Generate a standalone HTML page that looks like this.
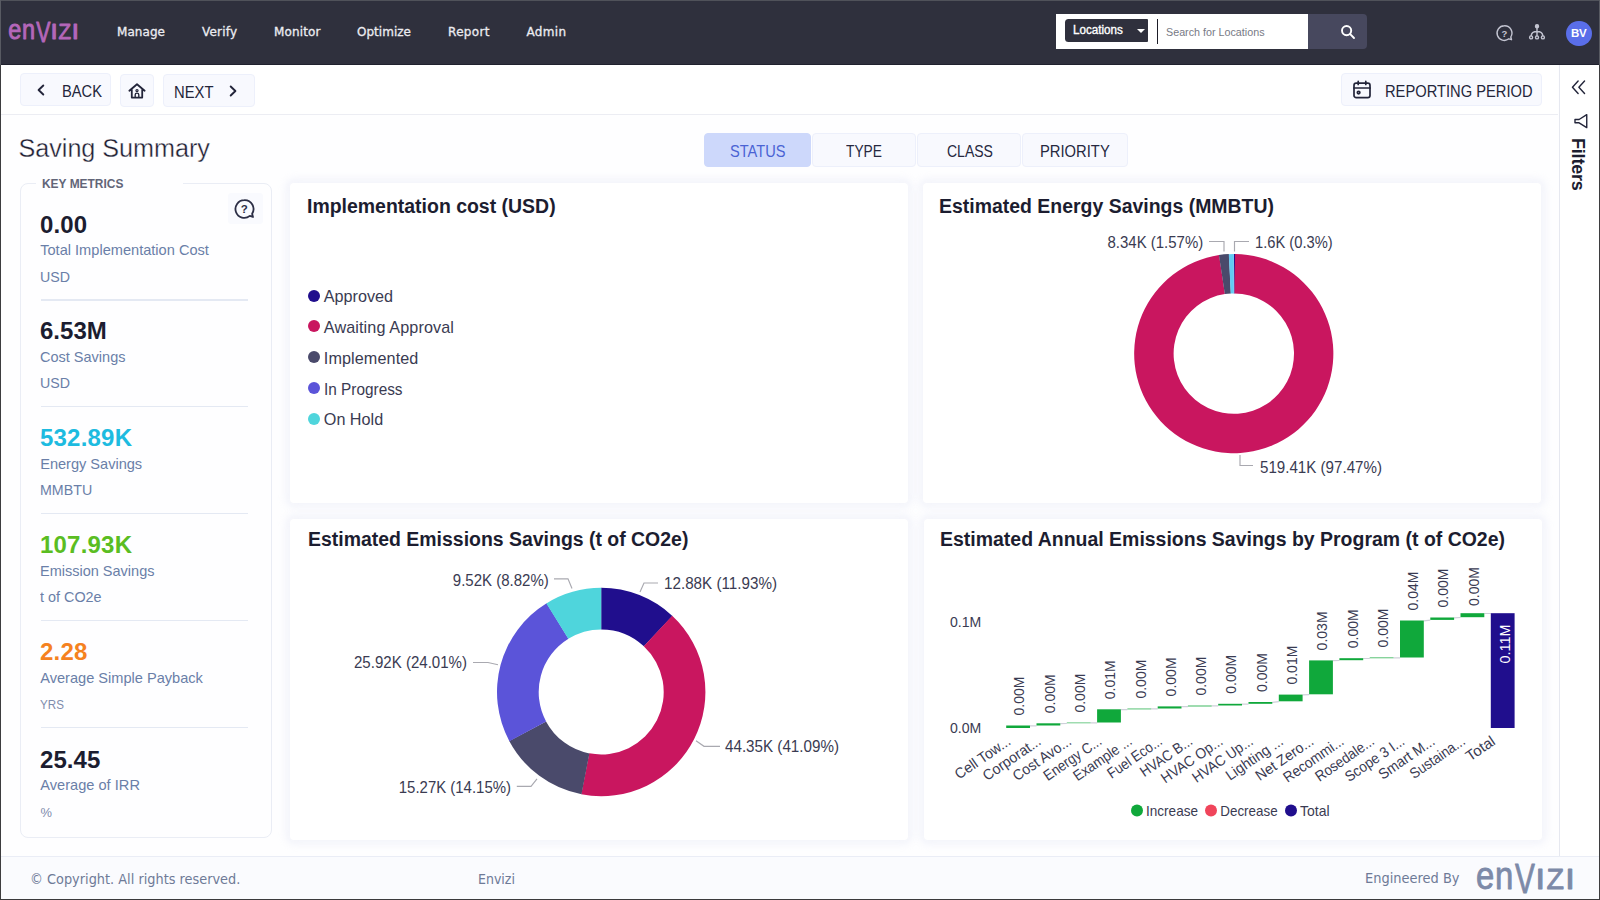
<!DOCTYPE html>
<html lang="en">
<head>
<meta charset="utf-8">
<title>Envizi - Saving Summary</title>
<style>
*{box-sizing:border-box;margin:0;padding:0}
html,body{width:1600px;height:900px;overflow:hidden;background:#fefeff;font-family:"Liberation Sans",sans-serif;color:#23253a}
.abs{position:absolute}
#page{position:relative;width:1600px;height:900px;overflow:hidden;background:#fefeff}
#frame{position:absolute;left:0;top:0;width:1600px;height:900px;z-index:50;pointer-events:none}#frame i{position:absolute;display:block}
/* header */
#hdr{position:absolute;left:0;top:0;width:1600px;height:65px;background:#2f303d;border-top:2px solid #2f303d;border-bottom:1px solid #20212e}
.nav{position:absolute;top:20.5px;font-family:"DejaVu Sans","Liberation Sans",sans-serif;font-size:12px;color:#ececf1;line-height:18px;white-space:nowrap;-webkit-text-stroke:.3px #ececf1}
.t{position:absolute;white-space:nowrap;line-height:1}
/* toolbar */
#tb{position:absolute;left:0;top:65px;width:1558px;height:50px;background:#fff;border-bottom:1px solid #ecedf3}
.btn{position:absolute;background:#f8f9fe;border:1px solid #edf0fb;border-radius:4px}
/* side */
#side{position:absolute;left:1559px;top:65px;width:42px;height:791px;background:#fff;border-left:1px solid #e6e8f0}
/* cards */
.card{position:absolute;background:#fff;border-radius:4px;box-shadow:0 0 9px 4px rgba(239,240,249,.8)}
.ct{position:absolute;left:18px;top:12px;font-weight:bold;font-size:19px;line-height:22px;color:#1c1d30;white-space:nowrap}
/* footer */
#ft{position:absolute;left:0;top:856px;width:1600px;height:44px;background:#fafbfe;border-top:1px solid #eaedf6}
</style>
</head>
<body>
<div id="page">
<div id="hdr">
<div class="abs" style="left:0;top:-2px;width:1600px;height:1px;background:#50525a"></div>
<svg class="abs" style="left:8.5px;top:19px;overflow:visible" width="70.0" height="24.0" viewBox="0 0 70 24" fill="#b466b9" stroke="#b466b9" stroke-width="0.95" stroke-linejoin="round" font-family="Liberation Sans, sans-serif"><text><tspan x="-0.75" y="17.8" font-size="27.1" textLength="13.04" lengthAdjust="spacingAndGlyphs">e</tspan><tspan x="12.94" y="17.8" font-size="27.1" textLength="13.09" lengthAdjust="spacingAndGlyphs">n</tspan><tspan x="27.16" y="20.7" font-size="30.1" textLength="14.19" lengthAdjust="spacingAndGlyphs">V</tspan><tspan x="41.62" y="17.8" font-size="21.2" textLength="7.15" lengthAdjust="spacingAndGlyphs">I</tspan><tspan x="49.60" y="17.8" font-size="21.2" textLength="12.54" lengthAdjust="spacingAndGlyphs">Z</tspan><tspan x="62.87" y="17.8" font-size="21.2" textLength="7.15" lengthAdjust="spacingAndGlyphs">I</tspan></text></svg>
<div class="nav" style="left:117px;letter-spacing:0.067px">Manage</div>
<div class="nav" style="left:202px;letter-spacing:0.192px">Verify</div>
<div class="nav" style="left:274px;letter-spacing:0.147px">Monitor</div>
<div class="nav" style="left:357px;letter-spacing:0.028px">Optimize</div>
<div class="nav" style="left:448px;letter-spacing:0.344px">Report</div>
<div class="nav" style="left:526.5px;letter-spacing:0.314px">Admin</div>
<div class="abs" style="left:1056px;top:12px;width:252px;height:35.300px;background:#fff"></div>
<div class="abs" style="left:1308px;top:12px;width:59px;height:35.300px;background:#47485e;border-radius:0 4px 4px 0"></div>
<div class="abs" style="left:1064.500px;top:17.200px;width:83.500px;height:23.300px;background:#2f303d;border-radius:3.500px 1px 1px 3.500px"></div>
<div class="t" style="left:1073px;top:20.5px;font-size:12px;line-height:14px;color:#fff;transform-origin:0 0;transform:scaleX(0.9694);-webkit-text-stroke:.35px #fff">Locations</div>
<div class="abs" style="left:1137px;top:27px;width:0;height:0;border-left:4px solid transparent;border-right:4px solid transparent;border-top:4.5px solid #fff"></div>
<div class="abs" style="left:1156.800px;top:17px;width:1.600px;height:25px;background:#1d1d28"></div>
<div class="t" style="left:1165.5px;top:23.5px;font-size:11px;line-height:13px;color:#777a85;transform-origin:0 0;transform:scaleX(0.9763);">Search for Locations</div>
<svg class="abs" style="left:1340px;top:22px" width="16" height="16" viewBox="0 0 16 16" fill="none" stroke="#fff" stroke-width="1.9" stroke-linecap="round"><circle cx="6.6" cy="6.6" r="4.6"/><path d="M10.2 10.2L14 14"/></svg>
<svg class="abs" style="left:1495px;top:22px" width="19" height="19" viewBox="0 0 19 19" fill="none" stroke="#c4c5d2" stroke-width="1.4" stroke-linecap="round" stroke-linejoin="round"><path d="M9.3 1.8a7.3 7.3 0 1 0 4.6 13l2.600.9-.7-2.700A7.300 7.300 0 0 0 9.300 1.800z"/><text x="9.3" y="12.6" font-size="9.5" font-weight="bold" text-anchor="middle" fill="#c4c5d2" stroke="none" font-family="Liberation Sans, sans-serif">?</text></svg>
<svg class="abs" style="left:1528px;top:21px" width="18" height="18" viewBox="0 0 18 18" fill="none" stroke="#c4c5d2" stroke-width="1.4" stroke-linecap="round"><circle cx="9" cy="3.2" r="1.5" fill="#c4c5d2"/><path d="M9 5v8M9 8.5C5.5 8.5 3.4 10 3.2 12.6M9 8.500C12.5 8.500 14.600 10 14.800 12.600"/><circle cx="3.1" cy="14.4" r="1.5"/><circle cx="9" cy="14.4" r="1.5"/><circle cx="14.900" cy="14.400" r="1.500"/></svg>
<div class="abs" style="left:1566px;top:18.5px;width:25.5px;height:25.5px;border-radius:50%;background:#5a6ee9"></div>
<div class="t" style="left:1566px;top:25px;width:25.5px;text-align:center;font-size:11.5px;font-weight:bold;color:#fff;line-height:13px;letter-spacing:-.3px">BV</div>
</div>

<div id="tb">
<div class="btn" style="left:20px;top:8px;width:91px;height:33px"></div>
<svg class="abs" style="left:35px;top:18px" width="12" height="14" viewBox="0 0 12 14" fill="none" stroke="#23253a" stroke-width="1.9" stroke-linecap="round" stroke-linejoin="round"><path d="M8.300 2.500L3.600 7l4.700 4.500"/></svg>
<div class="t" style="left:62px;top:17px;font-size:16.2px;line-height:18px;color:#23253a;transform-origin:0 0;transform:scaleX(0.9067);">BACK</div>
<div class="btn" style="left:120px;top:9px;width:34px;height:33px"></div>
<svg class="abs" style="left:128px;top:17.500px" width="18" height="16.200" viewBox="0 0 20 18" fill="none" stroke="#23253a" stroke-width="2" stroke-linecap="round" stroke-linejoin="round"><path d="M1.500 8.600L10 1.400l8.500 7.200M4.200 7.200V16.200H15.800V7.200"/><circle cx="10" cy="8.400" r="1.200" stroke-width="1.300"/><path d="M8 16v-2.800a2 2 0 0 1 4 0V16" stroke-width="1.500"/></svg>
<div class="btn" style="left:163px;top:9px;width:92px;height:33px"></div>
<div class="t" style="left:173.5px;top:18.3px;font-size:16.2px;line-height:18px;color:#23253a;transform-origin:0 0;transform:scaleX(0.9142);">NEXT</div>
<svg class="abs" style="left:227px;top:18.5px" width="12" height="14" viewBox="0 0 12 14" fill="none" stroke="#23253a" stroke-width="1.9" stroke-linecap="round" stroke-linejoin="round"><path d="M3.700 2.500L8.400 7l-4.700 4.500"/></svg>
<div class="btn" style="left:1341px;top:8px;width:201px;height:33px"></div>
<svg class="abs" style="left:1352px;top:15px" width="20" height="20" viewBox="0 0 20 20" fill="none" stroke="#23253a" stroke-width="1.7" stroke-linecap="round" stroke-linejoin="round"><rect x="2" y="3.200" width="16" height="14.400" rx="2.200"/><path d="M2 8h16M6.200 1.400v3M13.800 1.400v3"/><circle cx="6.600" cy="12.600" r="1.300"/></svg>
<div class="t" style="left:1385px;top:17px;font-size:16.2px;line-height:18px;color:#23253a;transform-origin:0 0;transform:scaleX(0.9082);">REPORTING PERIOD</div>
</div>

<div id="side">
<svg class="abs" style="left:10px;top:14.300px" width="17" height="17" viewBox="0 0 18 18" fill="none" stroke="#23253a" stroke-width="1.500" stroke-linecap="round" stroke-linejoin="round"><path d="M8.600 2.200L2.600 8.800l6 6.600M15.400 2.200L9.400 8.800l6 6.600"/></svg>
<svg class="abs" style="left:12.300px;top:47.500px" width="16.800" height="16.800" viewBox="0 0 18 18" fill="none" stroke="#23253a" stroke-width="1.500" stroke-linecap="round" stroke-linejoin="round"><path d="M15.800 1.800V15.700L7.600 10.500H3.200V7H7.600Z"/></svg>
<div class="t" style="left:10.300px;top:73px;width:16px;height:54px;writing-mode:vertical-rl;font-size:18px;font-weight:bold;line-height:16px;color:#1c1d30;letter-spacing:-.2px">Filters</div>
</div>

<div class="t" style="left:18.5px;top:133.2px;font-size:25.2px;line-height:30px;color:#1e2033;letter-spacing:-0.029px;-webkit-text-stroke:.35px #fefeff">Saving Summary</div>
<div class="abs" style="left:704px;top:133px;width:106.5px;height:34px;border-radius:4px;background:#cdd8fb;border:1px solid #cdd8fb"></div>
<div class="t" style="left:729.5px;top:142.4px;font-size:16.2px;line-height:18px;color:#4a63d4;transform-origin:0 0;transform:scaleX(0.9024);">STATUS</div>
<div class="abs" style="left:811.5px;top:133px;width:104px;height:34px;border-radius:4px;background:#f8f9fe;border:1px solid #edf0fb"></div>
<div class="t" style="left:846px;top:142.4px;font-size:16.2px;line-height:18px;color:#26283f;transform-origin:0 0;transform:scaleX(0.8508);">TYPE</div>
<div class="abs" style="left:917px;top:133px;width:104px;height:34px;border-radius:4px;background:#f8f9fe;border:1px solid #edf0fb"></div>
<div class="t" style="left:946.5px;top:142.4px;font-size:16.2px;line-height:18px;color:#26283f;transform-origin:0 0;transform:scaleX(0.8658);">CLASS</div>
<div class="abs" style="left:1022px;top:133px;width:106px;height:34px;border-radius:4px;background:#f8f9fe;border:1px solid #edf0fb"></div>
<div class="t" style="left:1040px;top:142.4px;font-size:16.2px;line-height:18px;color:#26283f;transform-origin:0 0;transform:scaleX(0.9123);">PRIORITY</div>
<div class="abs" style="left:19.5px;top:183px;width:252.5px;height:654.5px;border:1.500px solid #eaedf5;border-radius:8px;background:#fefeff"></div>
<div class="abs" style="left:35.500px;top:176px;width:147.500px;height:16px;background:#fefeff"></div>
<div class="t" style="left:41.8px;top:177px;font-size:12.3px;line-height:15px;color:#626578;font-weight:bold;transform-origin:0 0;transform:scaleX(0.9709);">KEY METRICS</div>
<div class="abs" style="left:228px;top:193px;width:34.500px;height:31px;background:#f9fafe;border-radius:3px"></div>
<svg class="abs" style="left:233.2px;top:197.700px" width="23" height="23" viewBox="0 0 19 19" fill="none" stroke="#2c2e45" stroke-width="1.500" stroke-linecap="round" stroke-linejoin="round"><path d="M9.3 1.8a7.3 7.3 0 1 0 4.6 13l2.600.9-.7-2.700A7.300 7.300 0 0 0 9.300 1.800z"/><text x="9.300" y="12.700" font-size="9.500" font-weight="bold" text-anchor="middle" fill="#2c2e45" stroke="none" font-family="Liberation Sans, sans-serif">?</text></svg>
<div class="t" style="left:40px;top:210.5px;font-size:24px;line-height:28px;color:#1c1d30;font-weight:bold;letter-spacing:0.096px;">0.00</div>
<div class="t" style="left:40.2px;top:241.3px;font-size:14.6px;line-height:18px;color:#6a7fa8;letter-spacing:0.0px;">Total Implementation Cost</div>
<div class="t" style="left:40.2px;top:267.5px;font-size:14.6px;line-height:18px;color:#6a7fa8;transform-origin:0 0;transform:scaleX(0.9732);">USD</div>
<div class="abs" style="left:40.800px;top:299.3px;width:207px;height:1.300px;background:#e4e9f3"></div>
<div class="t" style="left:40px;top:317.0px;font-size:24px;line-height:28px;color:#1c1d30;font-weight:bold;letter-spacing:0.024px;">6.53M</div>
<div class="t" style="left:40.2px;top:347.8px;font-size:14.6px;line-height:18px;color:#6a7fa8;transform-origin:0 0;transform:scaleX(0.9940);">Cost Savings</div>
<div class="t" style="left:40.2px;top:374.0px;font-size:14.6px;line-height:18px;color:#6a7fa8;transform-origin:0 0;transform:scaleX(0.9732);">USD</div>
<div class="abs" style="left:40.800px;top:405.8px;width:207px;height:1.300px;background:#e4e9f3"></div>
<div class="t" style="left:40px;top:424.2px;font-size:24px;line-height:28px;color:#1dbbe0;font-weight:bold;letter-spacing:0.21px;">532.89K</div>
<div class="t" style="left:40.2px;top:455.0px;font-size:14.6px;line-height:18px;color:#6a7fa8;letter-spacing:-0.02px;">Energy Savings</div>
<div class="t" style="left:40.2px;top:481.2px;font-size:14.6px;line-height:18px;color:#6a7fa8;transform-origin:0 0;transform:scaleX(0.9752);">MMBTU</div>
<div class="abs" style="left:40.800px;top:513.0px;width:207px;height:1.300px;background:#e4e9f3"></div>
<div class="t" style="left:40px;top:531.0px;font-size:24px;line-height:28px;color:#5abd22;font-weight:bold;letter-spacing:0.21px;">107.93K</div>
<div class="t" style="left:40.2px;top:561.8px;font-size:14.6px;line-height:18px;color:#6a7fa8;transform-origin:0 0;transform:scaleX(0.9937);">Emission Savings</div>
<div class="t" style="left:40.2px;top:588.0px;font-size:14.6px;line-height:18px;color:#6a7fa8;transform-origin:0 0;transform:scaleX(0.9858);">t of CO2e</div>
<div class="abs" style="left:40.800px;top:619.8px;width:207px;height:1.300px;background:#e4e9f3"></div>
<div class="t" style="left:40px;top:637.9px;font-size:24px;line-height:28px;color:#f5821f;font-weight:bold;letter-spacing:0.196px;">2.28</div>
<div class="t" style="left:40.2px;top:668.7px;font-size:14.6px;line-height:18px;color:#6a7fa8;letter-spacing:-0.003px;">Average Simple Payback</div>
<div class="t" style="left:40.4px;top:696.3px;font-size:12.9px;line-height:18px;color:#7f8cad;transform-origin:0 0;transform:scaleX(0.9010);">YRS</div>
<div class="abs" style="left:40.800px;top:726.7px;width:207px;height:1.300px;background:#e4e9f3"></div>
<div class="t" style="left:40px;top:745.5px;font-size:24px;line-height:28px;color:#1c1d30;font-weight:bold;letter-spacing:0.085px;">25.45</div>
<div class="t" style="left:40.2px;top:776.3px;font-size:14.6px;line-height:18px;color:#6a7fa8;letter-spacing:0.019px;">Average of IRR</div>
<div class="t" style="left:40.4px;top:803.9px;font-size:12.9px;line-height:18px;color:#7f8cad;letter-spacing:0.33px;">%</div>
<div class="card" style="left:290px;top:183px;width:618px;height:319.5px"></div>
<div class="t" style="left:307.3px;top:195px;font-size:19.6px;line-height:22px;color:#1c1d30;font-weight:bold;transform-origin:0 0;transform:scaleX(0.9929);">Implementation cost (USD)</div>
<div class="abs" style="left:308.4px;top:289.5px;width:12px;height:12px;border-radius:50%;background:#200e8d"></div>
<div class="t" style="left:323.8px;top:285.8px;font-size:16.2px;line-height:20px;color:#3a3b52;letter-spacing:-0.022px;">Approved</div>
<div class="abs" style="left:308.4px;top:320.4px;width:12px;height:12px;border-radius:50%;background:#c9165f"></div>
<div class="t" style="left:323.8px;top:316.7px;font-size:16.2px;line-height:20px;color:#3a3b52;letter-spacing:0.107px;">Awaiting Approval</div>
<div class="abs" style="left:308.4px;top:351.3px;width:12px;height:12px;border-radius:50%;background:#4a4a6b"></div>
<div class="t" style="left:323.8px;top:347.6px;font-size:16.2px;line-height:20px;color:#3a3b52;letter-spacing:0.095px;">Implemented</div>
<div class="abs" style="left:308.4px;top:382.2px;width:12px;height:12px;border-radius:50%;background:#5b54d9"></div>
<div class="t" style="left:323.8px;top:378.5px;font-size:16.2px;line-height:20px;color:#3a3b52;transform-origin:0 0;transform:scaleX(0.9488);">In Progress</div>
<div class="abs" style="left:308.4px;top:413.1px;width:12px;height:12px;border-radius:50%;background:#4fd5dc"></div>
<div class="t" style="left:323.8px;top:409.4px;font-size:16.2px;line-height:20px;color:#3a3b52;letter-spacing:-0.005px;">On Hold</div>
<div class="card" style="left:923px;top:183px;width:618px;height:319.5px"></div>
<div class="t" style="left:939.3px;top:195px;font-size:19.6px;line-height:22px;color:#1c1d30;font-weight:bold;transform-origin:0 0;transform:scaleX(0.9925);">Estimated Energy Savings (MMBTU)</div>
<div class="card" style="left:290px;top:518.5px;width:618px;height:321px"></div>
<div class="t" style="left:307.5px;top:528.3px;font-size:19.6px;line-height:22px;color:#1c1d30;font-weight:bold;transform-origin:0 0;transform:scaleX(0.9924);">Estimated Emissions Savings (t of CO2e)</div>
<div class="card" style="left:923.5px;top:518.5px;width:618px;height:321px"></div>
<div class="t" style="left:939.5px;top:528.3px;font-size:19.6px;line-height:22px;color:#1c1d30;font-weight:bold;transform-origin:0 0;transform:scaleX(0.9935);">Estimated Annual Emissions Savings by Program (t of CO2e)</div>
<svg class="abs" style="left:0;top:0" width="1600" height="900" viewBox="0 0 1600 900">
<path d="M1233.80 254.00A99.6 99.6 0 0 1 1235.10 254.01L1234.59 293.41A60.2 60.2 0 0 0 1233.80 293.40Z" fill="#200e8d"/>
<path d="M1235.02 254.01A99.6 99.6 0 1 1 1219.08 255.09L1224.90 294.06A60.2 60.2 0 1 0 1234.54 293.40Z" fill="#c9165f"/>
<path d="M1218.91 255.12A99.6 99.6 0 0 1 1228.93 254.12L1230.86 293.47A60.2 60.2 0 0 0 1224.80 294.08Z" fill="#4a4a6b"/>
<path d="M1228.76 254.13A99.6 99.6 0 0 1 1233.80 254.00L1233.80 293.40A60.2 60.2 0 0 0 1230.75 293.48Z" fill="#62cbf3"/>
<path d="M1224 251.500V241.500H1209M1234.500 251.500V241.500H1249M1240 455V465.500H1253" fill="none" stroke="#a9a9b0" stroke-width="1.150"/>
<text x="1203.2" y="248" font-size="16.2" fill="#3a3b52" textLength="95.7" lengthAdjust="spacingAndGlyphs" text-anchor="end" font-family="Liberation Sans, sans-serif" >8.34K (1.57%)</text>
<text x="1255" y="248" font-size="16.2" fill="#3a3b52" textLength="77.6" lengthAdjust="spacingAndGlyphs" text-anchor="start" font-family="Liberation Sans, sans-serif" >1.6K (0.3%)</text>
<text x="1260" y="472.6" font-size="16.2" fill="#3a3b52" textLength="122.0" lengthAdjust="spacingAndGlyphs" text-anchor="start" font-family="Liberation Sans, sans-serif" >519.41K (97.47%)</text>
<path d="M601.20 587.80A104.2 104.2 0 0 1 672.39 615.91L643.90 646.36A62.5 62.5 0 0 0 601.20 629.50Z" fill="#200e8d"/>
<path d="M672.20 615.73A104.2 104.2 0 0 1 581.28 794.28L589.25 753.35A62.5 62.5 0 0 0 643.78 646.25Z" fill="#c9165f"/>
<path d="M581.55 794.33A104.2 104.2 0 0 1 509.23 740.98L546.04 721.38A62.5 62.5 0 0 0 589.41 753.38Z" fill="#4a4a6b"/>
<path d="M509.36 741.22A104.2 104.2 0 0 1 546.60 603.25L568.45 638.77A62.5 62.5 0 0 0 546.11 721.52Z" fill="#5b54d9"/>
<path d="M546.37 603.40A104.2 104.2 0 0 1 601.20 587.80L601.20 629.50A62.5 62.5 0 0 0 568.31 638.85Z" fill="#4fd5dc"/>
<path d="M572 588.500L568 578.800H554M640 592L644 583H658M498 664.800L488 662.500H473M696 740.800L704 746.300H720M537 778.800L531 786.300H516.800" fill="none" stroke="#a9a9b0" stroke-width="1.150"/>
<text x="548.8" y="585.6" font-size="16.2" fill="#3a3b52" textLength="96.0" lengthAdjust="spacingAndGlyphs" text-anchor="end" font-family="Liberation Sans, sans-serif" >9.52K (8.82%)</text>
<text x="664" y="589" font-size="16.2" fill="#3a3b52" textLength="113.0" lengthAdjust="spacingAndGlyphs" text-anchor="start" font-family="Liberation Sans, sans-serif" >12.88K (11.93%)</text>
<text x="467" y="668.4" font-size="16.2" fill="#3a3b52" textLength="113.0" lengthAdjust="spacingAndGlyphs" text-anchor="end" font-family="Liberation Sans, sans-serif" >25.92K (24.01%)</text>
<text x="725" y="752" font-size="16.2" fill="#3a3b52" textLength="114.0" lengthAdjust="spacingAndGlyphs" text-anchor="start" font-family="Liberation Sans, sans-serif" >44.35K (41.09%)</text>
<text x="511" y="793.3" font-size="16.2" fill="#3a3b52" textLength="112.2" lengthAdjust="spacingAndGlyphs" text-anchor="end" font-family="Liberation Sans, sans-serif" >15.27K (14.15%)</text>
<text x="950" y="627" font-size="14.6" fill="#3a3b52" textLength="31.3" lengthAdjust="spacingAndGlyphs" text-anchor="start" font-family="Liberation Sans, sans-serif" >0.1M</text>
<text x="950" y="733.2" font-size="14.6" fill="#3a3b52" textLength="31.3" lengthAdjust="spacingAndGlyphs" text-anchor="start" font-family="Liberation Sans, sans-serif" >0.0M</text>
<path d="M1030.0 725.8L1036.5 725.8M1060.3 723.6L1066.8 723.5M1090.6 722.9L1097.1 722.8M1120.9 709.6L1127.4 709.6M1151.2 708.9L1157.7 708.8M1181.5 706.7L1187.9 706.7M1211.7 705.9L1218.2 705.8M1242.0 704.1L1248.5 704.1M1272.3 702.3L1278.8 701.6M1302.6 694.9L1309.1 694.6M1332.9 660.7L1339.4 660.5M1363.2 658.5L1369.7 658.5M1393.5 657.8L1400.0 657.8M1423.8 620.8L1430.3 620.2M1454.1 617.8L1460.5 617.5M1484.3 613.5L1490.8 613.5" stroke="#cfd0da" stroke-width="1.200" fill="none"/>
<rect x="1006.2" y="725.5" width="23.8" height="2.5" fill="#10a83b"/>
<text x="0" y="0" font-size="14.6" fill="#3a3b52" textLength="39.0" lengthAdjust="spacingAndGlyphs" text-anchor="start" font-family="Liberation Sans, sans-serif" transform="translate(1024.3 715.5) rotate(-90)">0.00M</text>
<text x="0" y="0" font-size="14.8" fill="#3a3b52" textLength="64.0" lengthAdjust="spacingAndGlyphs" text-anchor="end" font-family="Liberation Sans, sans-serif" transform="translate(1011.8 743.500) rotate(-34.500)">Cell Tow...</text>
<rect x="1036.5" y="723.3" width="23.8" height="2.2" fill="#10a83b"/>
<text x="0" y="0" font-size="14.6" fill="#3a3b52" textLength="39.0" lengthAdjust="spacingAndGlyphs" text-anchor="start" font-family="Liberation Sans, sans-serif" transform="translate(1054.6 713.3) rotate(-90)">0.00M</text>
<text x="0" y="0" font-size="14.8" fill="#3a3b52" textLength="66.8" lengthAdjust="spacingAndGlyphs" text-anchor="end" font-family="Liberation Sans, sans-serif" transform="translate(1042.1 743.500) rotate(-34.500)">Corporat...</text>
<rect x="1066.8" y="722.6" width="23.8" height="0.6" fill="#10a83b"/>
<text x="0" y="0" font-size="14.6" fill="#3a3b52" textLength="39.0" lengthAdjust="spacingAndGlyphs" text-anchor="start" font-family="Liberation Sans, sans-serif" transform="translate(1084.9 712.6) rotate(-90)">0.00M</text>
<text x="0" y="0" font-size="14.8" fill="#3a3b52" textLength="67.2" lengthAdjust="spacingAndGlyphs" text-anchor="end" font-family="Liberation Sans, sans-serif" transform="translate(1072.4 743.500) rotate(-34.500)">Cost Avo...</text>
<rect x="1097.1" y="709.3" width="23.8" height="13.2" fill="#10a83b"/>
<text x="0" y="0" font-size="14.6" fill="#3a3b52" textLength="39.0" lengthAdjust="spacingAndGlyphs" text-anchor="start" font-family="Liberation Sans, sans-serif" transform="translate(1115.2 699.3) rotate(-90)">0.01M</text>
<text x="0" y="0" font-size="14.8" fill="#3a3b52" textLength="66.6" lengthAdjust="spacingAndGlyphs" text-anchor="end" font-family="Liberation Sans, sans-serif" transform="translate(1102.7 743.500) rotate(-34.500)">Energy C...</text>
<rect x="1127.4" y="708.6" width="23.8" height="0.7" fill="#10a83b"/>
<text x="0" y="0" font-size="14.6" fill="#3a3b52" textLength="39.0" lengthAdjust="spacingAndGlyphs" text-anchor="start" font-family="Liberation Sans, sans-serif" transform="translate(1145.5 698.6) rotate(-90)">0.00M</text>
<text x="0" y="0" font-size="14.8" fill="#3a3b52" textLength="67.3" lengthAdjust="spacingAndGlyphs" text-anchor="end" font-family="Liberation Sans, sans-serif" transform="translate(1133.0 743.500) rotate(-34.500)">Example ...</text>
<rect x="1157.7" y="706.4" width="23.8" height="2.1" fill="#10a83b"/>
<text x="0" y="0" font-size="14.6" fill="#3a3b52" textLength="39.0" lengthAdjust="spacingAndGlyphs" text-anchor="start" font-family="Liberation Sans, sans-serif" transform="translate(1175.8 696.4) rotate(-90)">0.00M</text>
<text x="0" y="0" font-size="14.8" fill="#3a3b52" textLength="62.8" lengthAdjust="spacingAndGlyphs" text-anchor="end" font-family="Liberation Sans, sans-serif" transform="translate(1163.3 743.500) rotate(-34.500)">Fuel Eco...</text>
<rect x="1187.9" y="705.6" width="23.8" height="0.8" fill="#10a83b"/>
<text x="0" y="0" font-size="14.6" fill="#3a3b52" textLength="39.0" lengthAdjust="spacingAndGlyphs" text-anchor="start" font-family="Liberation Sans, sans-serif" transform="translate(1206.0 695.6) rotate(-90)">0.00M</text>
<text x="0" y="0" font-size="14.8" fill="#3a3b52" textLength="59.8" lengthAdjust="spacingAndGlyphs" text-anchor="end" font-family="Liberation Sans, sans-serif" transform="translate(1193.5 743.500) rotate(-34.500)">HVAC B...</text>
<rect x="1218.2" y="703.8" width="23.8" height="1.7" fill="#10a83b"/>
<text x="0" y="0" font-size="14.6" fill="#3a3b52" textLength="39.0" lengthAdjust="spacingAndGlyphs" text-anchor="start" font-family="Liberation Sans, sans-serif" transform="translate(1236.3 693.8) rotate(-90)">0.00M</text>
<text x="0" y="0" font-size="14.8" fill="#3a3b52" textLength="71.0" lengthAdjust="spacingAndGlyphs" text-anchor="end" font-family="Liberation Sans, sans-serif" transform="translate(1223.8 743.500) rotate(-34.500)">HVAC Op...</text>
<rect x="1248.5" y="702.0" width="23.8" height="1.8" fill="#10a83b"/>
<text x="0" y="0" font-size="14.6" fill="#3a3b52" textLength="39.0" lengthAdjust="spacingAndGlyphs" text-anchor="start" font-family="Liberation Sans, sans-serif" transform="translate(1266.6 692.0) rotate(-90)">0.00M</text>
<text x="0" y="0" font-size="14.8" fill="#3a3b52" textLength="70.0" lengthAdjust="spacingAndGlyphs" text-anchor="end" font-family="Liberation Sans, sans-serif" transform="translate(1254.1 743.500) rotate(-34.500)">HVAC Up...</text>
<rect x="1278.8" y="694.6" width="23.8" height="6.7" fill="#10a83b"/>
<text x="0" y="0" font-size="14.6" fill="#3a3b52" textLength="39.0" lengthAdjust="spacingAndGlyphs" text-anchor="start" font-family="Liberation Sans, sans-serif" transform="translate(1296.9 684.6) rotate(-90)">0.01M</text>
<text x="0" y="0" font-size="14.8" fill="#3a3b52" textLength="66.1" lengthAdjust="spacingAndGlyphs" text-anchor="end" font-family="Liberation Sans, sans-serif" transform="translate(1284.4 743.500) rotate(-34.500)">Lighting ...</text>
<rect x="1309.1" y="660.4" width="23.8" height="33.9" fill="#10a83b"/>
<text x="0" y="0" font-size="14.6" fill="#3a3b52" textLength="39.0" lengthAdjust="spacingAndGlyphs" text-anchor="start" font-family="Liberation Sans, sans-serif" transform="translate(1327.2 650.4) rotate(-90)">0.03M</text>
<text x="0" y="0" font-size="14.8" fill="#3a3b52" textLength="66.6" lengthAdjust="spacingAndGlyphs" text-anchor="end" font-family="Liberation Sans, sans-serif" transform="translate(1314.7 743.500) rotate(-34.500)">Net Zero...</text>
<rect x="1339.4" y="658.2" width="23.8" height="2.0" fill="#10a83b"/>
<text x="0" y="0" font-size="14.6" fill="#3a3b52" textLength="39.0" lengthAdjust="spacingAndGlyphs" text-anchor="start" font-family="Liberation Sans, sans-serif" transform="translate(1357.5 648.2) rotate(-90)">0.00M</text>
<text x="0" y="0" font-size="14.8" fill="#3a3b52" textLength="69.8" lengthAdjust="spacingAndGlyphs" text-anchor="end" font-family="Liberation Sans, sans-serif" transform="translate(1345.0 743.500) rotate(-34.500)">Recommi...</text>
<rect x="1369.7" y="657.5" width="23.8" height="0.7" fill="#10a83b"/>
<text x="0" y="0" font-size="14.6" fill="#3a3b52" textLength="39.0" lengthAdjust="spacingAndGlyphs" text-anchor="start" font-family="Liberation Sans, sans-serif" transform="translate(1387.8 647.5) rotate(-90)">0.00M</text>
<text x="0" y="0" font-size="14.8" fill="#3a3b52" textLength="67.8" lengthAdjust="spacingAndGlyphs" text-anchor="end" font-family="Liberation Sans, sans-serif" transform="translate(1375.3 743.500) rotate(-34.500)">Rosedale...</text>
<rect x="1400.0" y="620.5" width="23.8" height="37.0" fill="#10a83b"/>
<text x="0" y="0" font-size="14.6" fill="#3a3b52" textLength="39.0" lengthAdjust="spacingAndGlyphs" text-anchor="start" font-family="Liberation Sans, sans-serif" transform="translate(1418.1 610.5) rotate(-90)">0.04M</text>
<text x="0" y="0" font-size="14.8" fill="#3a3b52" textLength="68.5" lengthAdjust="spacingAndGlyphs" text-anchor="end" font-family="Liberation Sans, sans-serif" transform="translate(1405.6 743.500) rotate(-34.500)">Scope 3 I...</text>
<rect x="1430.3" y="617.5" width="23.8" height="2.4" fill="#10a83b"/>
<text x="0" y="0" font-size="14.6" fill="#3a3b52" textLength="39.0" lengthAdjust="spacingAndGlyphs" text-anchor="start" font-family="Liberation Sans, sans-serif" transform="translate(1448.4 607.5) rotate(-90)">0.00M</text>
<text x="0" y="0" font-size="14.8" fill="#3a3b52" textLength="64.4" lengthAdjust="spacingAndGlyphs" text-anchor="end" font-family="Liberation Sans, sans-serif" transform="translate(1435.9 743.500) rotate(-34.500)">Smart M...</text>
<rect x="1460.5" y="613.2" width="23.8" height="4.0" fill="#10a83b"/>
<text x="0" y="0" font-size="14.6" fill="#3a3b52" textLength="39.0" lengthAdjust="spacingAndGlyphs" text-anchor="start" font-family="Liberation Sans, sans-serif" transform="translate(1478.7 606.0) rotate(-90)">0.00M</text>
<text x="0" y="0" font-size="14.8" fill="#3a3b52" textLength="63.3" lengthAdjust="spacingAndGlyphs" text-anchor="end" font-family="Liberation Sans, sans-serif" transform="translate(1466.2 743.500) rotate(-34.500)">Sustaina...</text>
<rect x="1490.8" y="613.2" width="23.8" height="114.8" fill="#200e8d"/>
<text x="0" y="0" font-size="14.6" fill="#fff" textLength="39.0" lengthAdjust="spacingAndGlyphs" text-anchor="start" font-family="Liberation Sans, sans-serif" transform="translate(1509.7 663.500) rotate(-90)">0.11M</text>
<text x="0" y="0" font-size="14.8" fill="#3a3b52" textLength="32.1" lengthAdjust="spacingAndGlyphs" text-anchor="end" font-family="Liberation Sans, sans-serif" transform="translate(1496.4 743.500) rotate(-34.500)">Total</text>
<circle cx="1137" cy="810.400" r="6" fill="#10a83b"/>
<text x="1146" y="815.5" font-size="14.6" fill="#3a3b52" textLength="52.0" lengthAdjust="spacingAndGlyphs" text-anchor="start" font-family="Liberation Sans, sans-serif" >Increase</text>
<circle cx="1211" cy="810.400" r="6" fill="#f0455b"/>
<text x="1220.3" y="815.5" font-size="14.6" fill="#3a3b52" textLength="57.3" lengthAdjust="spacingAndGlyphs" text-anchor="start" font-family="Liberation Sans, sans-serif" >Decrease</text>
<circle cx="1291" cy="810.400" r="6" fill="#200e8d"/>
<text x="1300" y="815.5" font-size="14.6" fill="#3a3b52" textLength="29.6" lengthAdjust="spacingAndGlyphs" text-anchor="start" font-family="Liberation Sans, sans-serif" >Total</text>
</svg>
<div id="ft">
<div class="t" style="left:29.5px;top:14.5px;font-size:13.4px;line-height:16px;color:#6e7a97;font-family:'DejaVu Sans','Liberation Sans',sans-serif;transform-origin:0 0;transform:scaleX(0.9639);">© Copyright. All rights reserved.</div>
<div class="t" style="left:478px;top:14.5px;font-size:13.4px;line-height:16px;color:#6e7a97;font-family:'DejaVu Sans','Liberation Sans',sans-serif;transform-origin:0 0;transform:scaleX(0.9398);">Envizi</div>
<div class="t" style="left:1365px;top:13.5px;font-size:13.4px;line-height:16px;color:#6e7a97;font-family:'DejaVu Sans','Liberation Sans',sans-serif;transform-origin:0 0;transform:scaleX(0.9701);">Engineered By</div>
<svg class="abs" style="left:1477px;top:7px;overflow:visible" width="98.0" height="33.6" viewBox="0 0 70 24" fill="#7d8aa8" stroke="#7d8aa8" stroke-width="0.6" stroke-linejoin="round" font-family="Liberation Sans, sans-serif"><text><tspan x="-0.75" y="17.8" font-size="27.1" textLength="13.04" lengthAdjust="spacingAndGlyphs">e</tspan><tspan x="12.94" y="17.8" font-size="27.1" textLength="13.09" lengthAdjust="spacingAndGlyphs">n</tspan><tspan x="27.16" y="20.7" font-size="30.1" textLength="14.19" lengthAdjust="spacingAndGlyphs">V</tspan><tspan x="41.62" y="17.8" font-size="21.2" textLength="7.15" lengthAdjust="spacingAndGlyphs">I</tspan><tspan x="49.60" y="17.8" font-size="21.2" textLength="12.54" lengthAdjust="spacingAndGlyphs">Z</tspan><tspan x="62.87" y="17.8" font-size="21.2" textLength="7.15" lengthAdjust="spacingAndGlyphs">I</tspan></text></svg>
</div>

<div id="frame"><i style="left:0;top:0;width:1px;height:65px;background:#585a62"></i><i style="left:1599px;top:0;width:1px;height:65px;background:#585a62"></i><i style="left:0;top:65px;width:1px;height:835px;background:#3d3d3f"></i><i style="left:1599px;top:65px;width:1px;height:835px;background:#3d3d3f"></i><i style="left:0;top:899px;width:1600px;height:1px;background:#3a3a3c"></i></div>
</div>
</body>
</html>
